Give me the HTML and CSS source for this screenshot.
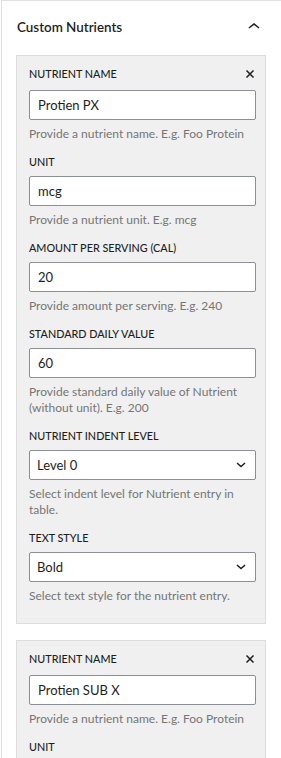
FILE: index.html
```html
<!DOCTYPE html>
<html lang="en">
<head>
    <meta charset="UTF-8">
    <meta name="viewport" content="width=device-width, initial-scale=1.0">
    <title>Custom Nutrients</title>
    <link rel="stylesheet" href="styles.css">
</head>
<body>
    <div class="panel">
        <div class="panel-header">
            <span class="panel-title">Custom Nutrients</span>
            <svg class="panel-toggle" width="24" height="24" viewBox="0 0 24 24"><path d="M6.5 12.4L12 8l5.5 4.4-.9 1.2L12 10l-4.6 3.6-1-1.2z"/></svg>
        </div>

        <div class="panel-body">
            <!-- nutrient 1 -->
            <div class="nutrient-card">
                <div class="field">
                    <div class="field-head">
                        <label class="field-label">Nutrient Name</label>
                        <svg class="remove-btn" width="10" height="10" viewBox="0 0 10 10"><path d="M1.5 1.5l7 7M8.5 1.5l-7 7"/></svg>
                    </div>
                    <input class="text-input" type="text" value="Protien PX">
                    <p class="field-help">Provide a nutrient name. E.g. Foo Protein</p>
                </div>
                <div class="field">
                    <label class="field-label">Unit</label>
                    <input class="text-input" type="text" value="mcg">
                    <p class="field-help">Provide a nutrient unit. E.g. mcg</p>
                </div>
                <div class="field">
                    <label class="field-label">Amount Per Serving (cal)</label>
                    <input class="text-input" type="text" value="20">
                    <p class="field-help">Provide amount per serving. E.g. 240</p>
                </div>
                <div class="field">
                    <label class="field-label">Standard Daily Value</label>
                    <input class="text-input" type="text" value="60">
                    <p class="field-help">Provide standard daily value of Nutrient (without unit). E.g. 200</p>
                </div>
                <div class="field">
                    <label class="field-label">Nutrient Indent Level</label>
                    <div class="select-wrap">
                        <select class="select-input">
                            <option>Level 0</option>
                            <option>Level 1</option>
                        </select>
                        <svg class="select-arrow" width="10" height="6" viewBox="0 0 10 6"><path d="M1 1l4 3.5L9 1"/></svg>
                    </div>
                    <p class="field-help">Select indent level for Nutrient entry in table.</p>
                </div>
                <div class="field">
                    <label class="field-label">Text Style</label>
                    <div class="select-wrap">
                        <select class="select-input">
                            <option>Bold</option>
                            <option>Normal</option>
                        </select>
                        <svg class="select-arrow" width="10" height="6" viewBox="0 0 10 6"><path d="M1 1l4 3.5L9 1"/></svg>
                    </div>
                    <p class="field-help">Select text style for the nutrient entry.</p>
                </div>
            </div>

            <!-- nutrient 2 -->
            <div class="nutrient-card">
                <div class="field">
                    <div class="field-head">
                        <label class="field-label">Nutrient Name</label>
                        <svg class="remove-btn" width="10" height="10" viewBox="0 0 10 10"><path d="M1.5 1.5l7 7M8.5 1.5l-7 7"/></svg>
                    </div>
                    <input class="text-input" type="text" value="Protien SUB X">
                    <p class="field-help">Provide a nutrient name. E.g. Foo Protein</p>
                </div>
                <div class="field">
                    <label class="field-label">Unit</label>
                    <input class="text-input" type="text" value="">
                    <p class="field-help">Provide a nutrient unit. E.g. mcg</p>
                </div>
            </div>
        </div>
    </div>
</body>
</html>
```

FILE: styles.css
```css
body {
    margin: 0;
    background: #ffffff;
    font-family: 'Lato', 'Noto Sans', sans-serif;
    color: #1e1e1e;
    overflow: hidden;
}

.panel {
    border-top: 1px solid #e0e0e0;
    border-left: 1px solid #e0e0e0;
    margin-left: 1px;
    height: 757px;
    overflow: hidden;
}

.panel-header {
    display: flex;
    justify-content: space-between;
    align-items: center;
    padding: 14px 15px 0 15px;
    height: 24px;
}

.panel-title {
    font-size: 13.4px;
    font-weight: 600;
    line-height: 16px;
}

.panel-toggle {
    fill: #1e1e1e;
}

.panel-body {
    padding: 16px 15px 0 14px;
}

.nutrient-card {
    background: #f0f0f0;
    border: 1px solid #dddddd;
    padding: 9px 9px 9px 12px;
    margin-bottom: 16px;
}

.field {
    margin-bottom: 10px;
}

.field-head {
    display: flex;
    justify-content: space-between;
    align-items: center;
    height: 16px;
    padding-top: 1px;
    margin-bottom: 8px;
}

.field-head .field-label {
    padding-top: 0;
    margin-bottom: 0;
}

.remove-btn {
    stroke: #1e1e1e;
    stroke-width: 1.5;
    margin-right: 1px;
}

.field-label {
    display: block;
    font-size: 10.8px;
    font-weight: 500;
    line-height: 16px;
    text-transform: uppercase;
    padding-top: 2px;
    margin-bottom: 6px;
}

.text-input,
.select-input {
    display: block;
    width: 100%;
    height: 30px;
    box-sizing: border-box;
    border: 1px solid #8c8f94;
    border-radius: 2px;
    background: #ffffff;
    font-family: inherit;
    font-size: 13px;
    color: #1e1e1e;
    padding: 0 8px;
    margin: 0;
}

.select-wrap {
    position: relative;
}

.select-input {
    appearance: none;
    -webkit-appearance: none;
    padding-left: 7px;
}

.select-arrow {
    position: absolute;
    right: 10px;
    top: 12px;
    fill: none;
    stroke: #1e1e1e;
    stroke-width: 1.5;
    pointer-events: none;
}

.field-help {
    margin: 6px 0 0 0;
    font-size: 12px;
    line-height: 16px;
    color: #757575;
}
```
